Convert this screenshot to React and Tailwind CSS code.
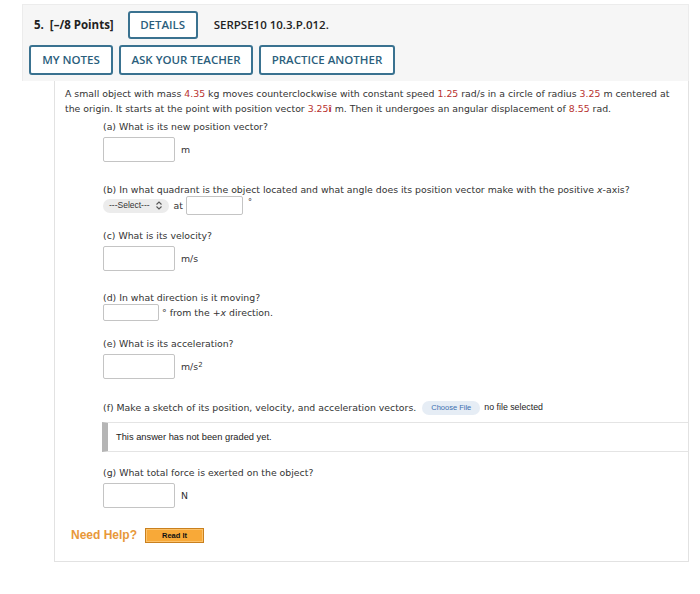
import React from "react"

const Red = ({ children }) => <span className="text-[#b8322f]">{children}</span>

const Box = ({ w = "w-[72px]", h = "h-[25px]" }) => (
    <input type="text" className={`${w} ${h} border border-[#c4c4c4] rounded-[2px] bg-white`} />
)

export default function App() {
    return (
        <div className="w-[700px] h-[594px] bg-white pl-[22px] pt-[4px] font-['DejaVu_Sans',Verdana,sans-serif] text-[#333]">
            <div className="w-[667px]">
                {/* header */}
                <div className="bg-[#f6f6f6] border border-[#ececec] border-b-0 pt-[6px] pb-[6px] font-['Open_Sans',sans-serif]">
                    <div className="flex items-center h-[28px] pl-[11px]">
                        <span className="text-[11.5px] font-bold text-[#222]">5.</span>
                        <span className="ml-[6px] text-[11.5px] font-bold text-[#222]">[–/8 Points]</span>
                        <button className="ml-[14px] h-[28px] w-[70px] border-2 border-[#3a7290] rounded-[3px] text-[11.5px] text-[#2b5e7c] bg-white font-semibold">DETAILS</button>
                        <span className="ml-[16px] text-[11.5px] font-semibold text-[#222]">SERPSE10 10.3.P.012.</span>
                    </div>
                    <div className="flex items-center gap-[6px] mt-[6px] pl-[6px]">
                        <button className="h-[30px] w-[84px] border-2 border-[#3a7290] rounded-[3px] text-[11.5px] text-[#2b5e7c] bg-white font-semibold">MY NOTES</button>
                        <button className="h-[30px] w-[134px] border-2 border-[#3a7290] rounded-[3px] text-[11.5px] text-[#2b5e7c] bg-white font-semibold">ASK YOUR TEACHER</button>
                        <button className="h-[30px] w-[136px] border-2 border-[#3a7290] rounded-[3px] text-[11.5px] text-[#2b5e7c] bg-white font-semibold">PRACTICE ANOTHER</button>
                    </div>
                </div>

                {/* question body */}
                <div className="ml-[32px] border border-t-0 border-[#e2e2e2] pl-[10px] pt-[5px] pb-[18px] text-[9.35px] leading-[15px]">
                    <p className="pr-[8px]">
                        A small object with mass <Red>4.35</Red> kg moves counterclockwise with constant speed <Red>1.25</Red> rad/s in a circle of radius <Red>3.25</Red> m centered at the origin. It starts at the point with position vector <Red>3.25<b>î</b></Red> m. Then it undergoes an angular displacement of <Red>8.55</Red> rad.
                    </p>

                    <div className="ml-[38px]">
                        <p className="mt-[3px]">(a) What is its new position vector?</p>
                        <div className="flex items-center mt-[3px]">
                            <Box />
                            <span className="ml-[6px]">m</span>
                        </div>

                        <p className="mt-[20px]">(b) In what quadrant is the object located and what angle does its position vector make with the positive <i>x</i>-axis?</p>
                        <div className="flex items-center mt-[-1px]">
                            <span className="flex items-center h-[14px] px-[6px] rounded-[7px] bg-[#ececec] text-[8.5px] font-['Liberation_Sans',Arial,sans-serif] text-[#333]">
                                ---Select---
                                <svg width="8" height="9" viewBox="0 0 8 9" className="ml-[5px]">
                                    <path d="M1.5 3.5 L4 1 L6.5 3.5 M1.5 5.5 L4 8 L6.5 5.5" fill="none" stroke="#555" strokeWidth="1.1" />
                                </svg>
                            </span>
                            <span className="ml-[5px]">at</span>
                            <span className="ml-[3px] flex"><Box w="w-[57px]" h="h-[19px]" /></span>
                            <span className="ml-[5px] self-start text-[8px] mt-[-1px]">°</span>
                        </div>

                        <p className="mt-[13px]">(c) What is its velocity?</p>
                        <div className="flex items-center mt-[3px]">
                            <Box />
                            <span className="ml-[6px]">m/s</span>
                        </div>

                        <p className="mt-[19px]">(d) In what direction is it moving?</p>
                        <div className="flex items-center mt-[-1px]">
                            <Box w="w-[56px]" h="h-[17px]" />
                            <span className="ml-[3px]">° from the +<i>x</i> direction.</span>
                        </div>

                        <p className="mt-[15px]">(e) What is its acceleration?</p>
                        <div className="flex items-center mt-[3px]">
                            <Box />
                            <span className="ml-[6px]">m/s<sup className="text-[7px]">2</sup></span>
                        </div>

                        <div className="flex items-center mt-[21px]">
                            <span>(f) Make a sketch of its position, velocity, and acceleration vectors.</span>
                            <span className="ml-[6px] h-[14px] px-[9px] flex items-center rounded-[7px] bg-[#e6edf5] text-[7.5px] text-[#3b6fb0] font-['Liberation_Sans',Arial,sans-serif]">Choose File</span>
                            <span className="ml-[4px] text-[8.8px] font-['Liberation_Sans',Arial,sans-serif] text-[#222]">no file selected</span>
                        </div>
                    </div>

                    <div className="ml-[37px] mt-[7px] h-[30px] flex items-center border-l-[6px] border-l-[#b5b5b5] border-y border-y-[#e4e4e4] pl-[8px] text-[9.3px] font-['Liberation_Sans',Arial,sans-serif] text-[#222]">
                        This answer has not been graded yet.
                    </div>

                    <div className="ml-[38px]">
                        <p className="mt-[13px]">(g) What total force is exerted on the object?</p>
                        <div className="flex items-center mt-[3px]">
                            <Box />
                            <span className="ml-[6px]">N</span>
                        </div>
                    </div>

                    <div className="flex items-center mt-[20px] ml-[6px] font-['Liberation_Sans',Arial,sans-serif]">
                        <span className="text-[12px] font-bold text-[#e8983a]">Need Help?</span>
                        <span className="ml-[8px] w-[59px] h-[15px] flex items-center justify-center bg-[#f8a938] border border-[#c9801e] text-[7.5px] font-bold text-[#111] shadow-[inset_0_0_0_1px_#fcc26a]">Read It</span>
                    </div>
                </div>
            </div>
        </div>
    )
}
